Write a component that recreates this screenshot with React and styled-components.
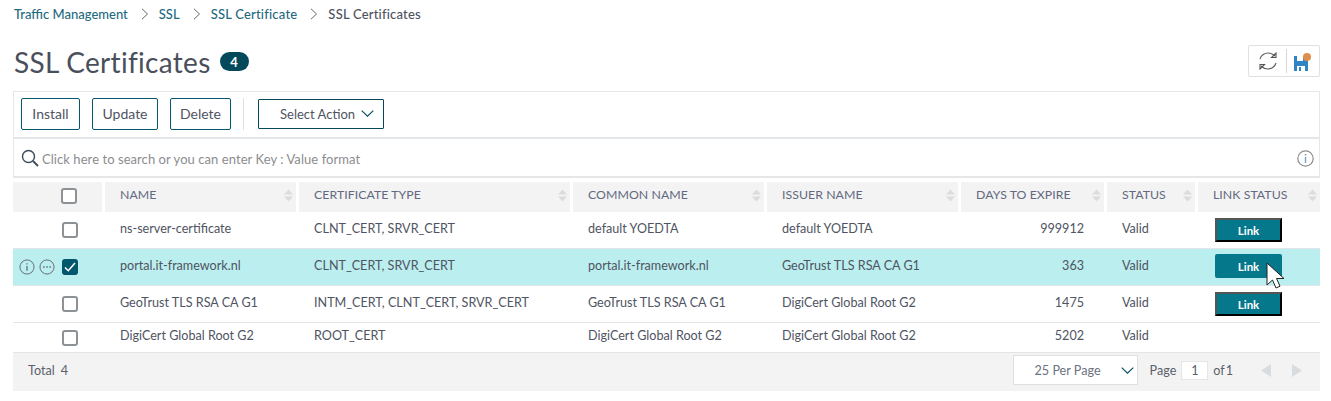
import React from "react";
import styled, { createGlobalStyle } from "styled-components";

const Global = createGlobalStyle`
  html, body { margin: 0; padding: 0; background: #fff; }
  body { font-family: Lato, "Open Sans", sans-serif; color: #545a68; font-size: 12.6px; }
  * { box-sizing: border-box; }
`;

const Page = styled.div`
  width: 1331px;
  height: 401px;
  padding: 0 11px 0 13px;
  overflow: hidden;
`;
const Crumbs = styled.nav`
  display: flex;
  align-items: center;
  height: 28px;
  font-size: 13px;
  font-weight: 500;
  padding-left: 1px;
`;
const Crumb = styled.span`
  color: ${p => (p.$current ? "#4d5260" : "#1f6a80")};
  letter-spacing: ${p => (p.$wide ? 0.2 : 0)}px;
`;
const CrumbSep = styled.svg`
  width: 8px;
  height: 12px;
  margin: 0 10px 0 13px;
  fill: none;
  stroke: #666;
  stroke-width: 1;
`;
const TitleRow = styled.div`
  display: flex;
  align-items: center;
  height: 63px;
  padding-top: 4px;
  padding-left: 1px;
`;
const Title = styled.h1`
  margin: 0;
  font-size: 28px;
  font-weight: 400;
  color: #4a4f5c;
  letter-spacing: 0.3px;
`;
const Badge = styled.span`
  margin-left: 9px;
  width: 29px;
  height: 19px;
  border-radius: 10px;
  background: #02495c;
  color: #fff;
  font-size: 13px;
  font-weight: 700;
  display: flex;
  align-items: center;
  justify-content: center;
`;
const IconBox = styled.div`
  margin-left: auto;
  width: 72px;
  height: 32px;
  margin-bottom: 2px;
  border: 1px solid #dfe0e2;
  border-radius: 2px;
  display: flex;
  align-items: center;
  padding: 0 0 0 9px;
`;
const IconDivider = styled.span`
  width: 1px;
  height: 24px;
  background: #d8d8d8;
  margin: 0 7px 0 8px;
`;
const Toolbar = styled.div`
  height: 48px;
  border: 1px solid #e6e6e6;
  border-bottom: 2px solid #e4e7ea;
  display: flex;
  align-items: center;
  padding: 0 0 2px 7px;
  gap: 12px;
`;
const Btn = styled.button`
  font: inherit;
  font-size: 14px;
  color: #4f5462;
  background: #fff;
  height: 32px;
  width: ${p => p.$w}px;
  padding: 0;
  border: 1px solid #02576c;
  border-radius: 2px;
`;
const ToolDivider = styled.span`
  width: 1px;
  height: 32px;
  background: #e0e0e0;
  margin-right: 2px;
`;
const SelectBtn = styled.button`
  font: inherit;
  font-size: 13px;
  color: #4f5462;
  background: #fff;
  height: 30px;
  width: 126px;
  padding: 0 9px 0 21px;
  border: 1px solid #02495c;
  border-radius: 1px;
  display: flex;
  align-items: center;
  justify-content: space-between;
`;
const Search = styled.div`
  height: 39px;
  border: 1px solid #e6e6e6;
  border-top: 0;
  border-bottom-width: 2px;
  display: flex;
  align-items: center;
  padding: 1px 5px 0 7px;
  color: #8b8d8f;
`;
const SearchText = styled.span`
  margin-left: 3px;
  margin-top: 2px;
  flex: 1;
  font-size: 13px;
  letter-spacing: 0.06px;
`;
const cols = "89px 191px 271px 191px 191px 143px 88px 122px";
const Head = styled.div`
  display: grid;
  grid-template-columns: ${cols};
  column-gap: 3px;
  margin-top: 4px;
  height: 30px;
`;
const HeadCell = styled.div`
  background: #f3f3f3;
  display: flex;
  align-items: center;
  justify-content: ${p => (p.$check ? "flex-end" : "flex-start")};
  position: relative;
  padding-left: ${p => (p.$check ? 0 : 15)}px;
  padding-right: ${p => (p.$check ? 25 : 0)}px;
  padding-bottom: ${p => (p.$check ? 2 : 5)}px;
  font-size: 12.3px;
  color: #626980;
  letter-spacing: 0.05px;
`;
const SortIcon = styled.svg`
  position: absolute;
  right: 3px;
  top: 7px;
  width: 9px;
  height: 13px;
  fill: #dcdcdc;
`;
const Row = styled.div`
  display: grid;
  grid-template-columns: ${cols};
  column-gap: 3px;
  height: ${p => p.$h || 37}px;
  align-items: center;
  background: ${p => (p.$sel ? "#bbeeee" : "#fff")};
  border-bottom: 1px solid #e3e6e9;
  color: #4f5462;
`;
const Cell = styled.div`
  padding-left: 15px;
  padding-right: ${p => (p.$right ? 20 : 0)}px;
  text-align: ${p => (p.$right ? "right" : "left")};
  padding-bottom: 4px;
  white-space: nowrap;
`;
const CheckCell = styled.div`
  display: flex;
  align-items: center;
  justify-content: flex-end;
  padding-right: 24px;
  gap: 4px;
`;
const Box = styled.span`
  width: 16px;
  height: 16px;
  border: 2px solid #8d9297;
  border-radius: 3px;
  background: #fff;
  display: flex;
`;
const CheckedBox = styled.span`
  width: 16px;
  height: 16px;
  border-radius: 3px;
  background: #02576c;
  margin-left: 3px;
  display: flex;
  align-items: center;
  justify-content: center;
`;
const RoundIcon = styled.svg`
  width: 16px;
  height: 16px;
  fill: none;
  stroke: #62666f;
`;
const LinkCellWrap = styled.div`
  padding-left: 17px;
  padding-bottom: ${p => (p.$hover ? 2 : 0)}px;
  position: relative;
`;
const LinkBtn = styled.button`
  font: inherit;
  font-size: 11.5px;
  font-weight: 700;
  color: #fff;
  width: 67px;
  height: 24px;
  padding: 0;
  background: #05788c;
  border-style: solid;
  border-width: 2px;
  border-color: ${p => (p.$hover ? "#05788c" : "#555 #000 #000 #555")};
  border-radius: ${p => (p.$hover ? 2 : 0)}px;
`;
const Cursor = styled.svg`
  position: absolute;
  left: 68px;
  top: 8px;
  width: 20px;
  height: 28px;
`;
const Footer = styled.div`
  height: 38px;
  background: #f3f3f3;
  display: flex;
  align-items: center;
  padding: 0 0 4px 15px;
  color: #5a5f6b;
`;
const TotalNum = styled.span`
  margin-left: 6px;
`;
const PerPage = styled.div`
  margin-left: auto;
  width: 125px;
  height: 30px;
  background: #fff;
  border: 1px solid #e0e0e0;
  display: flex;
  align-items: center;
  justify-content: space-between;
  padding: 0 3px 0 21px;
  color: #6c7280;
`;
const PageLabel = styled.span`
  margin-left: 12px;
`;
const PageInput = styled.span`
  width: 27px;
  height: 19px;
  margin: 0 5px;
  background: #fff;
  border: 1px solid #e6e6e6;
  display: flex;
  align-items: center;
  justify-content: center;
`;
const OfLabel = styled.span`
  word-spacing: -2px;
`;
const Pager = styled.svg`
  width: 10px;
  height: 13px;
  fill: #d9dcdf;
  margin-left: ${p => p.$gap}px;
`;
const FooterEnd = styled.span`
  width: 18px;
`;

const Sort = () => (
  <SortIcon viewBox="0 0 9 13">
    <path d="M4.5 0.5 9 5.5H0zM0 7.5h9L4.5 12.5z" />
  </SortIcon>
);
const Chevron = ({ w = 13, h = 7 }) => (
  <svg width={w} height={h} viewBox="0 0 13 7" fill="none" stroke="#02495c" strokeWidth="1.1">
    <path d="M.7.7 6.5 6.2 12.3.7" />
  </svg>
);
const Sep = () => (
  <CrumbSep viewBox="0 0 8 12">
    <path d="M1 .8 6.5 6 1 11.2" />
  </CrumbSep>
);
const Link = ({ hover }) => (
  <LinkCellWrap $hover={hover}>
    <LinkBtn $hover={hover}>Link</LinkBtn>
    {hover && (
      <Cursor viewBox="0 0 20 28">
        <path d="M1 1v22l5.5-5 3.5 8 4-1.800-3.500-7.700h7.500z" fill="#fff" stroke="#222" strokeWidth="1" />
      </Cursor>
    )}
  </LinkCellWrap>
);

const heads = ["NAME", "CERTIFICATE TYPE", "COMMON NAME", "ISSUER NAME", "DAYS TO EXPIRE", "STATUS", "LINK STATUS"];
const rows = [
  ["ns-server-certificate", "CLNT_CERT, SRVR_CERT", "default YOEDTA", "default YOEDTA", "999912", true],
  ["portal.it-framework.nl", "CLNT_CERT, SRVR_CERT", "portal.it-framework.nl", "GeoTrust TLS RSA CA G1", "363", true],
  ["GeoTrust TLS RSA CA G1", "INTM_CERT, CLNT_CERT, SRVR_CERT", "GeoTrust TLS RSA CA G1", "DigiCert Global Root G2", "1475", true],
  ["DigiCert Global Root G2", "ROOT_CERT", "DigiCert Global Root G2", "DigiCert Global Root G2", "5202", false],
];

export default function App() {
  return (
    <Page>
      <Global />
      <Crumbs>
        <Crumb>Traffic Management</Crumb>
        <Sep />
        <Crumb>SSL</Crumb>
        <Sep />
        <Crumb $wide>SSL Certificate</Crumb>
        <Sep />
        <Crumb $current $wide>SSL Certificates</Crumb>
      </Crumbs>
      <TitleRow>
        <Title>SSL Certificates</Title>
        <Badge>4</Badge>
        <IconBox>
          <svg width="20" height="18" viewBox="0 0 20 18" fill="none" stroke="#5a5a5a" strokeWidth="1.100">
            <path d="M2 7C3 3 7 1 10 1c3 0 5 1 7 3M18 11c-1 4-5 6-8 6-3 0-5-1-7-3" />
            <path d="M18 1v4.500h-4.500zM2 17v-4.500h4.500z" stroke="#555" />
          </svg>
          <IconDivider />
          <svg width="18" height="20" viewBox="0 0 18 20">
            <path d="M0 5h11l3 3v12H0z" fill="#2f84c4" />
            <path d="M3 5h6v5H3z" fill="#fff" />
            <path d="M3 15h8v5H3z" fill="#fff" />
            <path d="M5 16h2v4H5z" fill="#2f84c4" />
            <circle cx="13" cy="6" r="4" fill="#de8f4e" />
          </svg>
        </IconBox>
      </TitleRow>
      <Toolbar>
        <Btn $w={59}>Install</Btn>
        <Btn $w={66}>Update</Btn>
        <Btn $w={61}>Delete</Btn>
        <ToolDivider />
        <SelectBtn>
          Select Action
          <Chevron />
        </SelectBtn>
      </Toolbar>
      <Search>
        <svg width="18" height="18" viewBox="0 0 18 18" fill="none" stroke="#3d4a5c" strokeWidth="1.400">
          <circle cx="7.500" cy="7.500" r="6" />
          <path d="M12 12l5 5" strokeWidth="1.800" />
        </svg>
        <SearchText>Click here to search or you can enter Key : Value format</SearchText>
        <svg width="17" height="17" viewBox="0 0 17 17" fill="none" stroke="#8e8e8e" strokeWidth="1.200">
          <circle cx="8.500" cy="8.500" r="7.700" />
          <path d="M8.500 7v6" stroke="#6fa8ba" strokeWidth="1.400" />
          <path d="M8.500 4v1.500" stroke="#8a8a8a" strokeWidth="1.400" />
        </svg>
      </Search>
      <Head>
        <HeadCell $check>
          <Box />
        </HeadCell>
        {heads.map(h => (
          <HeadCell key={h}>
            {h}
            <Sort />
          </HeadCell>
        ))}
      </Head>
      {rows.map((r, i) => (
        <Row key={r[0]} $sel={i === 1} $h={i === 3 ? 30 : 37}>
          <CheckCell>
            {i === 1 ? (
              <>
                <RoundIcon viewBox="0 0 17 17">
                  <circle cx="8.500" cy="8.500" r="7.500" />
                  <path d="M8.500 7.500v5M8.500 4.500v1.300" strokeWidth="1.300" />
                </RoundIcon>
                <RoundIcon viewBox="0 0 17 17">
                  <circle cx="8.500" cy="8.500" r="7.500" />
                  <path d="M4.500 8.500h1.500M7.800 8.500h1.500M11 8.500h1.500" strokeWidth="1.500" />
                </RoundIcon>
                <CheckedBox>
                  <svg width="12" height="10" viewBox="0 0 12 10" fill="none" stroke="#fff" strokeWidth="1.600">
                    <path d="M1 5.500 4.300 8.700 11 1" />
                  </svg>
                </CheckedBox>
              </>
            ) : (
              <Box />
            )}
          </CheckCell>
          <Cell>{r[0]}</Cell>
          <Cell>{r[1]}</Cell>
          <Cell>{r[2]}</Cell>
          <Cell>{r[3]}</Cell>
          <Cell $right>{r[4]}</Cell>
          <Cell>Valid</Cell>
          {r[5] ? <Link hover={i === 1} /> : <div />}
        </Row>
      ))}
      <Footer>
        Total
        <TotalNum>4</TotalNum>
        <PerPage>
          25 Per Page
          <Chevron />
        </PerPage>
        <PageLabel>Page</PageLabel>
        <PageInput>1</PageInput>
        <OfLabel>of 1</OfLabel>
        <Pager $gap={28} viewBox="0 0 10 13">
          <path d="M10 0v13L0 6.500z" />
        </Pager>
        <Pager $gap={21} viewBox="0 0 10 13">
          <path d="M0 0v13l10-6.500z" />
        </Pager>
        <FooterEnd />
      </Footer>
    </Page>
  );
}
